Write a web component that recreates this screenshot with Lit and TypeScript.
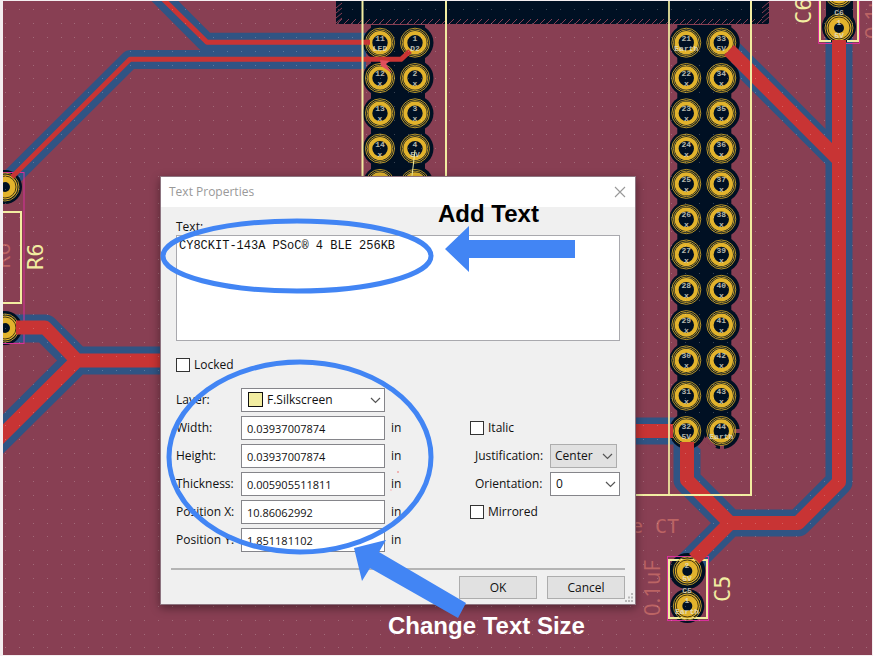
import { LitElement, html, svg, css } from "lit";
import { customElement } from "lit/decorators.js";

const range = (n: number) => Array.from({ length: n }, (_, i) => i);

const ROW_PITCH = 35.3;
const FIRST_ROW = 42.7;
const rowY = (i: number) => FIRST_ROW + i * ROW_PITCH;

const LEFT_HEADER = [
  { x: 380, pins: [["11", "LED"], ["12", "x"], ["13", "x"], ["14", "x"], ["15", "x"]] },
  { x: 415, pins: [["1", "D2"], ["2", "x"], ["3", "x"], ["4", "5V"], ["5", "x"]] },
];
const RIGHT_HEADER = [
  { x: 686.3, pins: range(12).map((i) => [String(21 + i), i === 0 ? "Earth" : i === 11 ? "5V" : "x"]) },
  { x: 721.3, pins: range(12).map((i) => [String(33 + i), i === 0 ? "5V" : i === 11 ? "Earth" : "x"]) },
];

@customElement("pcb-board")
export class PcbBoard extends LitElement {
  static styles = css`
    :host {
      display: block;
      overflow: hidden;
      background: #883f53;
    }
    svg { display: block; width: 100%; height: 100%; }
    .gap { fill: none; stroke: #305484; stroke-linejoin: round; }
    .track { fill: none; stroke: #c83434; stroke-linejoin: round; }
    .dark { fill: #001023; }
    .silk { fill: none; stroke: #f2eda1; stroke-width: 2; }
    .yard { fill: none; stroke: #d8309c; stroke-width: 1; }
    .ring { fill: none; stroke: #b8952a; stroke-width: 1; }
    .wire { fill: none; stroke: #f2eda1; stroke-width: 1; }
    .copper { fill: none; stroke: #e2b32c; stroke-width: 4; }
    .solid { fill: #e2b32c; }
    .etch { fill: none; stroke: #463812; stroke-width: 1; }
    .num { font: bold 8px "Liberation Mono", monospace; fill: #e4e2d4; fill-opacity: 0.8; text-anchor: middle; }
    .ref { font: 22px "DejaVu Sans Mono", monospace; fill: #f2eda1; }
    .val { font: 22px "Open Sans", sans-serif; fill: #bc6464; }
    .fab { font: 20px "DejaVu Sans Mono", monospace; fill: #bc6464; }
    .hatch { stroke: #883f53; stroke-width: 1; }
    .spoke { fill: none; stroke: #883f53; stroke-width: 4; }
    .dot { fill: #ffffff; fill-opacity: 0.22; }
  `;

  private pin(x: number, y: number, label: string[]) {
    return svg`
      <circle class="ring" cx=${x} cy=${y} r="14.5"></circle>
      <circle class="ring" cx=${x} cy=${y} r="12.8"></circle>
      <circle class="copper" cx=${x} cy=${y} r="9.7"></circle>
      <text class="num" x=${x} y=${y - 2}>${label[0]}</text>
      <text class="num" x=${x} y=${y + 8}>${label[1]}</text>`;
  }

  private halo(x0: number, x1: number, rows: number, bottom: number) {
    return svg`
      <rect class="dark" x=${x0 - 9} y="25" width=${x1 - x0 + 19} height=${bottom - 25}></rect>
      ${range(rows).map((i) => svg`
        <circle class="dark" cx=${x0 + 1} cy=${rowY(i)} r="18"></circle>
        <circle class="dark" cx=${x1 + 0.5} cy=${rowY(i)} r="18"></circle>`)}`;
  }

  private via(x: number, y: number, hole = 5) {
    return svg`
      <circle class="ring" cx=${x} cy=${y} r="14"></circle>
      <circle class="solid" cx=${x} cy=${y} r="12.5"></circle>
      <circle class="etch" cx=${x} cy=${y} r="11"></circle>
      <circle class="dark" cx=${x} cy=${y} r=${hole}></circle>`;
  }

  private dots() {
    return range(63).map((i) => range(47).map((j) => svg`
      <rect class="dot" x=${Math.round(5 + i * 13.88)} y=${Math.round(9 + j * 13.88)} width="1" height="1"></rect>`));
  }

  render() {
    return html`<svg aria-hidden="true"><g transform="translate(-3 -1)">
      <path class="gap" stroke-width="19" d="M158 -6L206 42.3H366M366 59.5H130L5 184"></path>
      <path class="gap" stroke-width="28" d="M5 328.5H45L77 360.5H180M77 360.5L-10 447"></path>
      <path class="gap" stroke-width="25" d="M724 45L839 160"></path>
      <path class="gap" stroke-width="27" d="M839 20V482L798 523H730L687 480V431H620M730 523L688 565"></path>

      <rect class="dark" x="336" y="1" width="433" height="23"></rect>
      ${range(61).map((i) => svg`<line class="hatch" x1=${337 + i * 7} y1="24" x2=${342 + i * 7} y2="19"></line>`)}
      ${range(4).map((i) => svg`
        <line class="hatch" x1="336" y1=${8 + i * 5} x2="342" y2=${3 + i * 5}></line>
        <line class="hatch" x1="762" y1=${8 + i * 5} x2="769" y2=${2 + i * 5}></line>`)}

      ${this.halo(380, 415, 5, 200)}
      ${this.halo(686.3, 721.3, 12, 430)}
      <path class="spoke" d="M699 448L707 439L715 448M722 445V452M734 431H744"></path>

      <circle class="dark" cx="5" cy="187" r="17"></circle>
      <circle class="dark" cx="5" cy="328" r="17"></circle>
      <rect class="yard" x="-5" y="172.5" width="29" height="171"></rect>
      <text class="val" transform="translate(10 269) rotate(-90)">R6</text>
      <rect class="silk" x="-5" y="212" width="26" height="91"></rect>
      ${this.via(5, 187)}
      ${this.via(5, 328)}
      <text class="ref" transform="translate(43 270) rotate(-90)">R6</text>

      <rect class="dark" x="826" y="0" width="27" height="36"></rect>
      <circle class="dark" cx="839" cy="27" r="17"></circle>
      <path class="yard" d="M818.5 0V43.5H859.5V0"></path>
      <path class="silk" d="M820 0V41H831M847 41H858V0"></path>
      ${this.via(839, -7)}
      ${this.via(839, 28)}
      <text class="num" x="839" y="15">C6</text>
      <text class="ref" transform="translate(811 24) rotate(-90)">C6</text>
      <text class="val" transform="translate(881 39) rotate(-90)">0.1uF</text>

      <circle class="dark" cx="687.3" cy="571" r="18"></circle>
      <circle class="dark" cx="687.3" cy="606" r="17"></circle>
      <rect class="yard" x="667.5" y="556.5" width="41" height="64"></rect>
      <rect class="silk" x="669" y="560" width="38" height="58"></rect>
      <text class="ref" transform="translate(730 602) rotate(-90)">C5</text>
      <text class="val" transform="translate(660 616) rotate(-90)">0.1uF</text>
      <text class="fab" x="631" y="533">e CT</text>

      ${LEFT_HEADER.map((c) => c.pins.map((p, i) => this.pin(c.x, rowY(i), p)))}
      ${RIGHT_HEADER.map((c) => c.pins.map((p, i) => this.pin(c.x, rowY(i), p)))}

      <path class="track" stroke-width="5" d="M158 -6L207 42.3H370M410 51L401 59.3H130L12 177"></path>
      <path d="M380 60L390 61L386 64L392 73L381 66Z" fill="#e0505c"></path>
      <path class="track" stroke-width="14" d="M16 327.5H45L77 360.5H180M77 360.5L-10 447"></path>
      <path class="track" stroke-width="14" d="M729 50L839 160M839 40V482L798 523H730L687 480V442M730 523L694 559M620 431H673"></path>
      ${this.via(687.3, 571)}
      ${this.via(687.3, 606)}
      <text class="num" x="687" y="568">2</text>
      <text class="num" x="687" y="581">5V</text>
      <text class="num" x="687" y="593">C5</text>
      <text class="num" x="687" y="603">1</text>
      <text class="num" x="687" y="614">Earth</text>
      <text class="num" x="839" y="25">1</text>
      <text class="num" x="839" y="38">5V</text>

      <path class="silk" d="M362.5 0V300M446 0V300M751 0V495H600"></path>
      <path class="silk" stroke-opacity="0.85" d="M669 0V495"></path>
      <path class="wire" d="M415 150L412 176"></path>
      ${this.dots()}
    </g></svg>`;
  }
}

@customElement("text-properties-dialog")
export class TextPropertiesDialog extends LitElement {
  static styles = css`
    :host {
      display: block;
      box-sizing: border-box;
      border: 1px solid #8d7480;
      background: #f0f0f0;
      color: #111;
      font: 12px/16px "Open Sans", "Noto Sans", sans-serif;
      box-shadow: 0 3px 9px rgba(0, 0, 0, 0.4);
    }
    * { box-sizing: border-box; }
    header {
      display: flex;
      align-items: center;
      justify-content: space-between;
      height: 30px;
      padding: 0 8px;
      background: #fff;
      color: #999;
    }
    h1 { margin: 0; font: inherit; }
    button, input, select, textarea { font: inherit; color: inherit; margin: 0; border-radius: 0; }
    .close { display: flex; padding: 2px 1px; border: 0; background: none; }
    .body { display: flex; flex-direction: column; padding: 12px 15px 0; }
    textarea {
      display: block;
      width: 100%;
      height: 106px;
      padding: 2px;
      border: 1px solid #a9a9ae;
      outline: 0;
      resize: none;
      background: #fff;
      font: 12px/16px "Liberation Mono", monospace;
    }
    .check { display: flex; align-items: center; gap: 4px; height: 14px; }
    .check input {
      appearance: none;
      width: 14px;
      height: 14px;
      border: 1px solid #333;
      background: #fff;
    }
    .locked { margin: 17px 0 16px; }
    .form { display: grid; grid-template-columns: 65px 144px 85px minmax(0, 1fr); grid-auto-rows: 24px; gap: 4px 0; align-items: center; }
    .field {
      width: 100%;
      height: 24px;
      padding: 0 5px;
      border: 1px solid #85858a;
      background: #fff;
      outline: 0;
      font-size: 11px;
    }
    .unit { padding-left: 6px; }
    .pick { position: relative; display: block; height: 24px; }
    .pick select { appearance: none; width: 100%; height: 24px; padding: 0 5px; border: 1px solid #85858a; background: #fff; outline: 0; }
    .pick .layer { padding-left: 25px; }
    .pick .flat { padding: 0 4px; border-color: #adadad; background: #e1e1e1; }
    .arrow { position: absolute; right: 4px; top: 8px; pointer-events: none; }
    .swatch { position: absolute; left: 7px; top: 4px; width: 15px; height: 15px; border: 1px solid #111; background: #f2eda1; pointer-events: none; }
    .pair { display: grid; grid-template-columns: 75px 70px; align-items: center; padding-left: 5px; }
    .narrow { width: 67px; }
    footer { position: relative; margin: 16px 10px 0; padding: 6px 0 5px; border-top: 2px solid #b4b4b4; }
    .actions { display: flex; justify-content: flex-end; gap: 10px; }
    .actions button { width: 78px; height: 23px; padding: 0; border: 1px solid #adadad; background: #e1e1e1; }
    .grip { position: absolute; right: -9px; bottom: 1px; }
  `;

  private arrow() {
    return html`<svg class="arrow" width="11" height="8" aria-hidden="true"><path d="M1 2L5.5 6.500L10 2" fill="none" stroke="#555" stroke-width="1.2"></path></svg>`;
  }

  private measure(id: string, label: string, value: string) {
    return html`
      <label for=${id}>${label}</label>
      <input class="field" id=${id} .value=${value} />
      <span class="unit">in</span>`;
  }

  render() {
    return html`
      <header>
        <h1>Text Properties</h1>
        <button class="close" aria-label="Close">
          <svg width="12" height="12" aria-hidden="true"><path d="M1 1L11 11M11 1L1 11" stroke="#999" stroke-width="1.1"></path></svg>
        </button>
      </header>
      <div class="body">
        <label for="text">Text:</label>
        <textarea id="text" spellcheck="false" .value=${"CY8CKIT-143A PSoC® 4 BLE 256KB"}></textarea>
        <label class="check locked"><input type="checkbox" />Locked</label>
        <div class="form">
          <label for="layer">Layer:</label>
          <div class="pick">
            <select class="layer" id="layer"><option>F.Silkscreen</option></select>
            <span class="swatch"></span>
            ${this.arrow()}
          </div>
          <span></span><span></span>

          ${this.measure("width", "Width:", "0.03937007874")}
          <label class="check"><input type="checkbox" />Italic</label>

          ${this.measure("height", "Height:", "0.03937007874")}
          <div class="pair">
            <label for="just">Justification:</label>
            <div class="pick narrow"><select class="flat" id="just"><option>Center</option></select>${this.arrow()}</div>
          </div>

          ${this.measure("thick", "Thickness:", "0.005905511811")}
          <div class="pair">
            <label for="orient">Orientation:</label>
            <div class="pick"><select id="orient"><option>0</option></select>${this.arrow()}</div>
          </div>

          ${this.measure("posx", "Position X:", "10.86062992")}
          <label class="check"><input type="checkbox" />Mirrored</label>

          ${this.measure("posy", "Position Y:", "1.851181102")}
        </div>
      </div>
      <footer>
        <div class="actions"><button>OK</button><button>Cancel</button></div>
        <svg class="grip" width="10" height="10" fill="#b8b8b8" aria-hidden="true">
          <path d="M7 0h2v2h-2zM4 3.500h2v2h-2zM7 3.500h2v2h-2zM1 7h2v2h-2zM4 7h2v2h-2zM7 7h2v2h-2z"></path>
        </svg>
      </footer>`;
  }
}

@customElement("app-root")
export class AppRoot extends LitElement {
  static styles = css`
    :host {
      position: relative;
      display: flex;
      box-sizing: border-box;
      height: 100vh;
      padding: 1px 1px 1px 3px;
      overflow: hidden;
      background: #f4eef0;
    }
    pcb-board { flex: 1; }
    text-properties-dialog { position: absolute; left: 160px; top: 176px; width: 476px; }
    .notes { position: absolute; left: 0; top: 0; width: 100%; height: 100%; pointer-events: none; }
    .loop { fill: none; stroke: #4285f4; stroke-width: 5; }
    .pointer { fill: #4285f4; }
    .caption { font: bold 24px "Liberation Sans", Arial, sans-serif; }
    .light { fill: #fff; }
  `;

  render() {
    return html`
      <pcb-board></pcb-board>
      <text-properties-dialog></text-properties-dialog>
      <svg class="notes">
        <circle cx="398" cy="472" r="1" fill="#f0a0a0"></circle>
        <circle cx="391" cy="490" r="1" fill="#f6c8c8"></circle>
        <ellipse class="loop" cx="297" cy="256" rx="134" ry="35"></ellipse>
        <ellipse class="loop" cx="300" cy="457" rx="131" ry="95"></ellipse>
        <path class="pointer" d="M445 249L469 226V240H575V258H469V272Z"></path>
        <path class="pointer" d="M354 548L386 540L379 552L466 603L458 618L370 568L362 581Z"></path>
        <text class="caption" x="438" y="222">Add Text</text>
        <text class="caption light" x="388" y="634">Change Text Size</text>
      </svg>`;
  }
}
